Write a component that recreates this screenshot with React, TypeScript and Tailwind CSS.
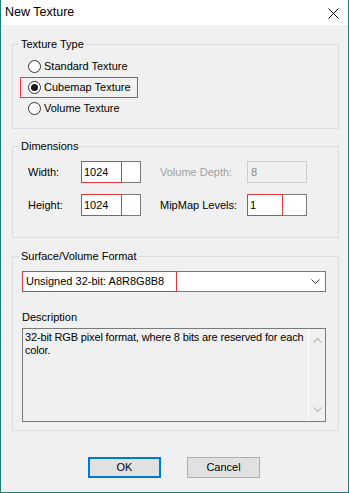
import React from 'react';

const RED = 'border-[#e8383d]';

const Radio: React.FC<{ label: string; checked?: boolean; marked?: boolean }> = ({ label, checked, marked }) => (
  <div className={`ml-[1px] flex h-[21px] w-[118px] items-center border pl-[7px] ${marked ? RED : 'border-transparent'}`}>
    <span className="flex h-[13px] w-[13px] items-center justify-center rounded-full border border-[#333333] bg-white">
      {checked && <span className="h-[7px] w-[7px] rounded-full bg-[#1a1a1a]" />}
    </span>
    <span className="ml-[3px]">{label}</span>
  </div>
);

const SpinBox: React.FC<{ value: string; textWidth: string }> = ({ value, textWidth }) => (
  <div className="flex h-[22px] w-[60px]">
    <div className={`flex h-full items-center border bg-white pl-[2px] ${RED} ${textWidth}`}>{value}</div>
    <div className="h-full flex-1 border-y border-r border-[#7a7a7a] bg-white" />
  </div>
);

const Group: React.FC<{ title: string; className?: string; children: React.ReactNode }> = ({ title, className, children }) => (
  <fieldset className={`ml-[11px] w-[327px] border border-[#dcdcdc] pl-[6px] ${className ?? ''}`}>
    <legend className="px-[2px] leading-[14px]">{title}</legend>
    {children}
  </fieldset>
);

export default function App() {
  return (
    <div className="h-[493px] w-[349px] border-x border-b border-[#22807a] bg-[#f0f0f0] font-['Liberation_Sans',Arial,sans-serif] text-[11px] text-black">
      {/* title bar */}
      <div className="flex h-[25px] items-center justify-between bg-white pl-[4px] pr-[9px]">
        <span className="text-[12.5px]">New Texture</span>
        <svg width="11" height="11" viewBox="0 0 11 11" className="mt-[1px]">
          <path d="M0.5 0.5 L10.5 10.5 M10.5 0.5 L0.5 10.5" stroke="#000" strokeWidth="1" />
        </svg>
      </div>

      <Group title="Texture Type" className="mt-[12px] pb-[9px] pt-[5px]">
        <Radio label="Standard Texture" />
        <Radio label="Cubemap Texture" checked marked />
        <Radio label="Volume Texture" />
      </Group>

      <Group title="Dimensions" className="mt-[10px] pb-[21px] pt-[8px]">
        <div className="flex flex-col gap-[11px] pl-[9px]">
          <div className="flex items-center">
            <span className="w-[53px]">Width:</span>
            <SpinBox value="1024" textWidth="w-[41px]" />
            <span className="ml-[19px] w-[87px] text-[#a0a0a0]">Volume Depth:</span>
            <div className="flex h-[22px] w-[60px] items-center border border-[#cccccc] pl-[3px] text-[#8a8a8a]">8</div>
          </div>
          <div className="flex items-center">
            <span className="w-[53px]">Height:</span>
            <SpinBox value="1024" textWidth="w-[41px]" />
            <span className="ml-[19px] w-[87px]">MipMap Levels:</span>
            <SpinBox value="1" textWidth="w-[36px]" />
          </div>
        </div>
      </Group>

      <Group title="Surface/Volume Format" className="mt-[11px] pb-[8px] pt-[8px]">
        <div className="ml-[3px] flex h-[21px] w-[304px] items-center justify-between border border-[#7a7a7a] bg-white">
          <div className={`-ml-px flex h-[21px] w-[155px] items-center border pl-[3px] ${RED}`}>Unsigned 32-bit: A8R8G8B8</div>
          <svg width="9" height="5" viewBox="0 0 9 5" className="mr-[5px]">
            <path d="M0.5 0.5 L4.5 4.5 L8.5 0.5" fill="none" stroke="#333" strokeWidth="1" />
          </svg>
        </div>

        <div className="ml-[3px] mt-[18px] leading-[14px]">Description</div>
        <div className="ml-[3px] mt-[4px] flex h-[94px] w-[304px] border border-[#7a7a7a]">
          <p className="flex-1 pl-[2px] pt-[2px] leading-[13px] tracking-[-0.15px]">
            32-bit RGB pixel format, where 8 bits are reserved for each color.
          </p>
          <div className="flex w-[17px] flex-col items-center justify-between border-l border-white py-[9px]">
            <svg width="9" height="5" viewBox="0 0 9 5">
              <path d="M0.5 4.5 L4.5 0.5 L8.5 4.5" fill="none" stroke="#c0c0c0" strokeWidth="1.3" />
            </svg>
            <svg width="9" height="5" viewBox="0 0 9 5">
              <path d="M0.5 0.5 L4.5 4.5 L8.5 0.5" fill="none" stroke="#c0c0c0" strokeWidth="1.3" />
            </svg>
          </div>
        </div>
      </Group>

      <div className="mt-[26px] flex pl-[87px]">
        <button className="flex h-[21px] w-[73px] items-center justify-center border-2 border-[#0078d7] bg-[#e1e1e1]">OK</button>
        <button className="ml-[26px] flex h-[21px] w-[73px] items-center justify-center border border-[#adadad] bg-[#e1e1e1]">Cancel</button>
      </div>
    </div>
  );
}
